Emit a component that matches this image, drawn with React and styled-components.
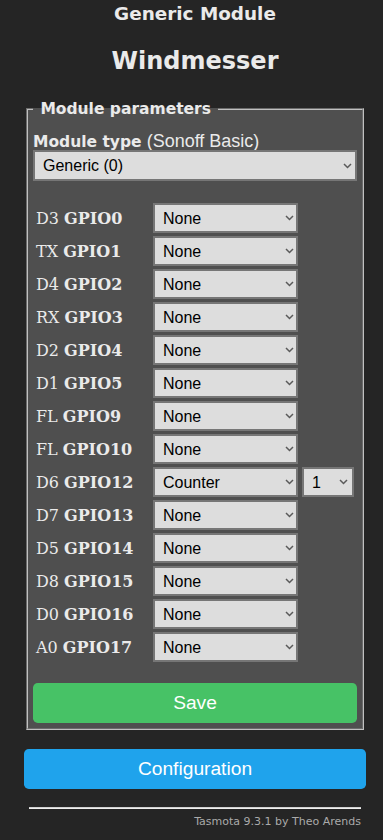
import React from "react";
import styled, { createGlobalStyle } from "styled-components";

const GlobalStyle = createGlobalStyle`
  html, body {
    margin: 0;
    background: #252525;
  }
`;

const Page = styled.div`
  padding: 3px 17px 0 24px;
  color: #eaeaea;
  font-family: "DejaVu Sans", Verdana, sans-serif;
`;

const Title = styled.h3`
  margin: 0;
  font-size: 18.4px;
  line-height: 22px;
  font-weight: bold;
  text-align: center;
`;

const DeviceName = styled.h2`
  margin: 22px 0 0;
  font-size: 24px;
  line-height: 28px;
  font-weight: bold;
  text-align: center;
`;

const Fieldset = styled.fieldset`
  margin: 25px 2px 0;
  padding: 0 5px 5px;
  border: 2px groove #c0c0c0;
  background: #4f4f4f;
  min-width: 0;
`;

const Legend = styled.legend`
  padding: 0 2px;
  font-size: 15.5px;
  line-height: 18px;
  font-weight: bold;
`;

const TypeLine = styled.div`
  margin-top: 14px;
  height: 18px;
  line-height: 18px;
  white-space: nowrap;

  & b {
    font-size: 15.5px;
  }
  & span {
    font-family: "Liberation Sans", Arial, sans-serif;
    font-size: 18px;
  }
`;

const SelectWrap = styled.div`
  position: relative;
  height: ${(p) => p.$h || 30}px;
`;

const NativeSelect = styled.select`
  appearance: none;
  -webkit-appearance: none;
  box-sizing: border-box;
  width: 100%;
  height: 100%;
  margin: 0;
  padding: 0 20px 0 8px;
  border: 2px solid #767676;
  border-radius: 0;
  background: #dddddd;
  color: #000;
  font-family: "Liberation Sans", Arial, sans-serif;
  font-size: 16px;
  outline: none;
`;

const Chevron = styled.svg`
  position: absolute;
  right: ${(p) => p.$r || 5}px;
  top: 50%;
  margin-top: -3px;
  pointer-events: none;
`;

function Select({ value, h, r }) {
  return (
    <SelectWrap $h={h}>
      <NativeSelect defaultValue={value}>
        <option value={value}>{value}</option>
      </NativeSelect>
      <Chevron $r={r} width="9" height="6" viewBox="0 0 9 6">
        <polyline
          points="1,1 4.5,4.5 8,1"
          fill="none"
          stroke="#5a5a5a"
          strokeWidth="1.5"
        />
      </Chevron>
    </SelectWrap>
  );
}

const GpioGrid = styled.div`
  margin-top: 22px;
  display: grid;
  grid-template-columns: 116px 145px 52px;
  column-gap: 4px;
  row-gap: 3px;
  grid-auto-rows: 30px;
  align-items: center;
`;

const Label = styled.div`
  padding-left: 3px;
  font-family: "DejaVu Serif", "Liberation Serif", serif;
  font-size: 16px;
  white-space: nowrap;
  color: #eaeaea;
`;

const Button = styled.button`
  display: block;
  box-sizing: border-box;
  width: 100%;
  height: 40px;
  margin: ${(p) => p.$mt || 0}px 0 0;
  border: 0;
  border-radius: 0.3rem;
  background: ${(p) => p.$bg};
  color: #fff;
  font-family: "Liberation Sans", Arial, sans-serif;
  font-size: 19.2px;
  line-height: 40px;
  padding: 0;
  cursor: pointer;
`;

const Footer = styled.div`
  margin-top: 18px;
  padding: 0 5px;
  text-align: right;
`;

const Rule = styled.hr`
  margin: 0;
  height: 0;
  border: 0;
  border-top: 1px solid #cfcfcf;
  border-bottom: 1px solid #eeeeee;
`;

const Credit = styled.a`
  display: block;
  margin-top: 6px;
  font-size: 11px;
  line-height: 13px;
  color: #aaa;
  text-decoration: none;
`;

const pins = [
  ["D3", "GPIO0", "None"],
  ["TX", "GPIO1", "None"],
  ["D4", "GPIO2", "None"],
  ["RX", "GPIO3", "None"],
  ["D2", "GPIO4", "None"],
  ["D1", "GPIO5", "None"],
  ["FL", "GPIO9", "None"],
  ["FL", "GPIO10", "None"],
  ["D6", "GPIO12", "Counter", "1"],
  ["D7", "GPIO13", "None"],
  ["D5", "GPIO14", "None"],
  ["D8", "GPIO15", "None"],
  ["D0", "GPIO16", "None"],
  ["A0", "GPIO17", "None"],
];

export default function App() {
  return (
    <>
      <GlobalStyle />
      <Page>
        <Title>Generic Module</Title>
        <DeviceName>Windmesser</DeviceName>

        <Fieldset>
          <Legend>
            <b>&nbsp;Module parameters&nbsp;</b>
          </Legend>
          <TypeLine>
            <b>Module type</b> <span>(Sonoff Basic)</span>
          </TypeLine>
          <Select value="Generic (0)" h={31} />

          <GpioGrid>
            {pins.map(([pin, gpio, fn, idx]) => (
              <React.Fragment key={gpio}>
                <Label>
                  {pin} <b>{gpio}</b>
                </Label>
                <Select value={fn} r={4} />
                {idx ? <Select value={idx} r={6} /> : <div />}
              </React.Fragment>
            ))}
          </GpioGrid>

          <Button $bg="#47c266" $mt={21}>
            Save
          </Button>
        </Fieldset>

        <Button $bg="#1fa3ec" $mt={19}>
          Configuration
        </Button>

        <Footer>
          <Rule />
          <Credit href="#">Tasmota 9.3.1 by Theo Arends</Credit>
        </Footer>
      </Page>
    </>
  );
}
